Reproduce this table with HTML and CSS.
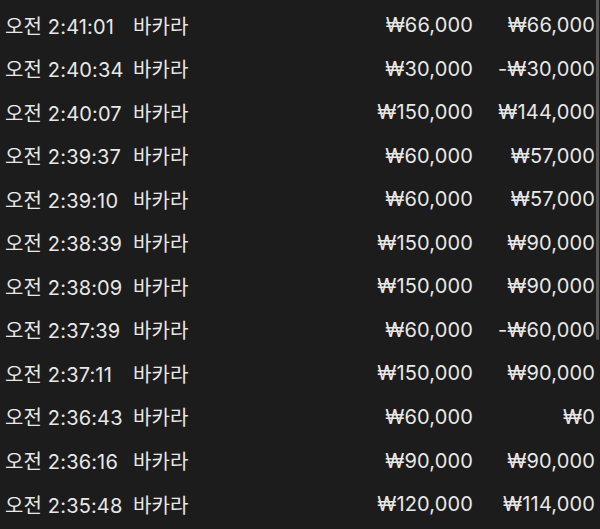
FILE: index.html
```html
<!DOCTYPE html>
<html lang="ko">
<head>
<meta charset="utf-8">
<link rel="stylesheet" href="styles.css">
</head>
<body>
<div class="list">
  <div class="row"><span class="time">오전 2:41:01</span><span class="game">바카라</span><span class="amt">₩66,000</span><span class="res">₩66,000</span></div>
  <div class="row"><span class="time">오전 2:40:34</span><span class="game">바카라</span><span class="amt">₩30,000</span><span class="res">-₩30,000</span></div>
  <div class="row"><span class="time">오전 2:40:07</span><span class="game">바카라</span><span class="amt">₩150,000</span><span class="res">₩144,000</span></div>
  <div class="row"><span class="time">오전 2:39:37</span><span class="game">바카라</span><span class="amt">₩60,000</span><span class="res">₩57,000</span></div>
  <div class="row"><span class="time">오전 2:39:10</span><span class="game">바카라</span><span class="amt">₩60,000</span><span class="res">₩57,000</span></div>
  <div class="row"><span class="time">오전 2:38:39</span><span class="game">바카라</span><span class="amt">₩150,000</span><span class="res">₩90,000</span></div>
  <div class="row"><span class="time">오전 2:38:09</span><span class="game">바카라</span><span class="amt">₩150,000</span><span class="res">₩90,000</span></div>
  <div class="row"><span class="time">오전 2:37:39</span><span class="game">바카라</span><span class="amt">₩60,000</span><span class="res">-₩60,000</span></div>
  <div class="row"><span class="time">오전 2:37:11</span><span class="game">바카라</span><span class="amt">₩150,000</span><span class="res">₩90,000</span></div>
  <div class="row"><span class="time">오전 2:36:43</span><span class="game">바카라</span><span class="amt">₩60,000</span><span class="res">₩0</span></div>
  <div class="row"><span class="time">오전 2:36:16</span><span class="game">바카라</span><span class="amt">₩90,000</span><span class="res">₩90,000</span></div>
  <div class="row"><span class="time">오전 2:35:48</span><span class="game">바카라</span><span class="amt">₩120,000</span><span class="res">₩114,000</span></div>
  <div class="scrollbar"></div>
</div>
</body>
</html>
```
FILE: styles.css
```css
html, body {
  margin: 0;
  padding: 0;
  background: #1c1c1c;
  width: 600px;
  height: 529px;
  overflow: hidden;
}
.list {
  position: relative;
  box-sizing: border-box;
  width: 600px;
  height: 529px;
  padding-top: 3.3px;
  font-family: Inter, "Noto Sans CJK KR", sans-serif;
  font-size: 20px;
  letter-spacing: 0.15px;
  color: #e8e8e8;
}
.row {
  display: grid;
  grid-template-columns: 128px 1fr 120px 122px;
  align-items: center;
  height: 43.56px;
  padding: 0 5px;
  white-space: nowrap;
}
.amt, .res {
  text-align: right;
}
.scrollbar {
  position: absolute;
  right: 1px;
  top: 0;
  width: 3px;
  height: 340px;
  border-radius: 0 0 2px 2px;
  background: #575757;
}
```
